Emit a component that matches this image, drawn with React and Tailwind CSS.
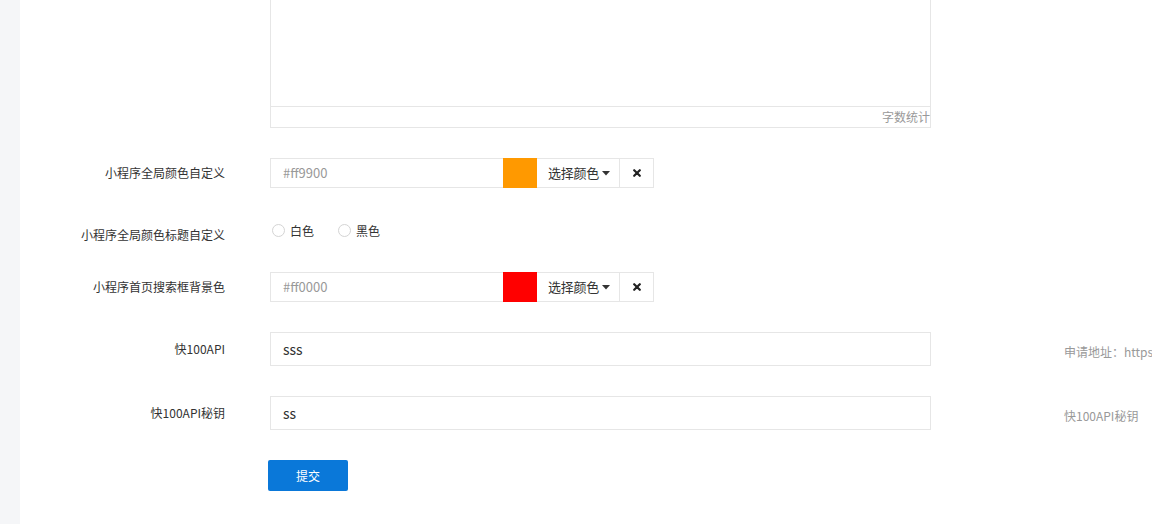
import React from "react";

const font = "font-['Noto_Sans_CJK_SC',sans-serif]";

const Label = ({ children, className = "" }) => (
  <div className={`w-[205px] shrink-0 text-right text-[12px] text-[#333] ${className}`}>
    {children}
  </div>
);

const Caret = () => (
  <svg width="8" height="5" viewBox="0 0 8 5" className="ml-[3px]">
    <path d="M0 0 L8 0 L4 4.5 Z" fill="#333" />
  </svg>
);

const Cross = () => (
  <svg width="8" height="8" viewBox="0 0 8 8">
    <path d="M1.2 1.2 L6.8 6.8 M6.8 1.2 L1.2 6.8" stroke="#222" strokeWidth="2.2" strokeLinecap="round" />
  </svg>
);

const ColorRow = ({ label, value, color }) => (
  <div className="flex items-center">
    <Label className="leading-[30px]">{label}</Label>
    <div className="ml-[45px] flex h-[30px]">
      <div className="w-[233px] border border-[#e6e6e6] border-r-0 pl-[12px] text-[13px] leading-[28px] text-[#999]">
        {value}
      </div>
      <div className="w-[34px]" style={{ backgroundColor: color }} />
      <div className="flex w-[83px] items-center justify-center border border-[#e6e6e6] border-l-0 pl-[2px] text-[13px] tracking-[-0.3px] text-[#333]">
        选择颜色
        <Caret />
      </div>
      <div className="flex w-[34px] items-center justify-center border border-[#e6e6e6] border-l-0">
        <Cross />
      </div>
    </div>
  </div>
);

const Radio = ({ label }) => (
  <label className="flex items-center text-[12px] leading-4 text-[#333]">
    <span className="h-[13px] w-[13px] rounded-full border border-[#d4d4d4] bg-white" />
    <span className="ml-[5px]">{label}</span>
  </label>
);

const TextRow = ({ label, value, help }) => (
  <div className="flex items-center">
    <Label>{label}</Label>
    <div className="ml-[45px] h-[34px] w-[661px] shrink-0 border border-[#e6e6e6] pl-[12px] text-[14px] leading-[32px] text-[#333]">
      {value}
    </div>
    <div className="ml-[133px] mt-[6px] whitespace-nowrap text-[12px] text-[#999]">{help}</div>
  </div>
);

export default function App() {
  return (
    <div className={`flex h-[524px] w-full overflow-hidden bg-white ${font}`}>
      <div className="w-[20px] shrink-0 bg-[#f5f6f8]" />
      <div className="flex min-w-0 flex-1 flex-col gap-[30px]">
        {/* editor bottom */}
        <div className="flex">
          <div className="ml-[250px] flex h-[128px] w-[661px] flex-col border border-t-0 border-[#e6e6e6]">
            <div className="flex-1 border-b border-[#e6e6e6]" />
            <div className="h-[20px] text-right text-[12px] leading-[20px] text-[#999]">字数统计</div>
          </div>
        </div>

        <ColorRow label="小程序全局颜色自定义" value="#ff9900" color="#ff9900" />

        <div className="flex h-[24px]">
          <Label className="pt-[9px] leading-4">小程序全局颜色标题自定义</Label>
          <div className="ml-[47px] flex gap-[24px] pt-[1px]">
            <Radio label="白色" />
            <Radio label="黑色" />
          </div>
        </div>

        <ColorRow label="小程序首页搜索框背景色" value="#ff0000" color="#ff0000" />

        <TextRow label="快100API" value="sss" help="申请地址：https://www.kuaidi100.com" />
        <TextRow label="快100API秘钥" value="ss" help="快100API秘钥" />

        <div className="flex">
          <button className="ml-[248px] h-[31px] w-[80px] rounded-[2px] bg-[#0a78d9] text-[12px] text-white">
            提交
          </button>
        </div>
      </div>
    </div>
  );
}
